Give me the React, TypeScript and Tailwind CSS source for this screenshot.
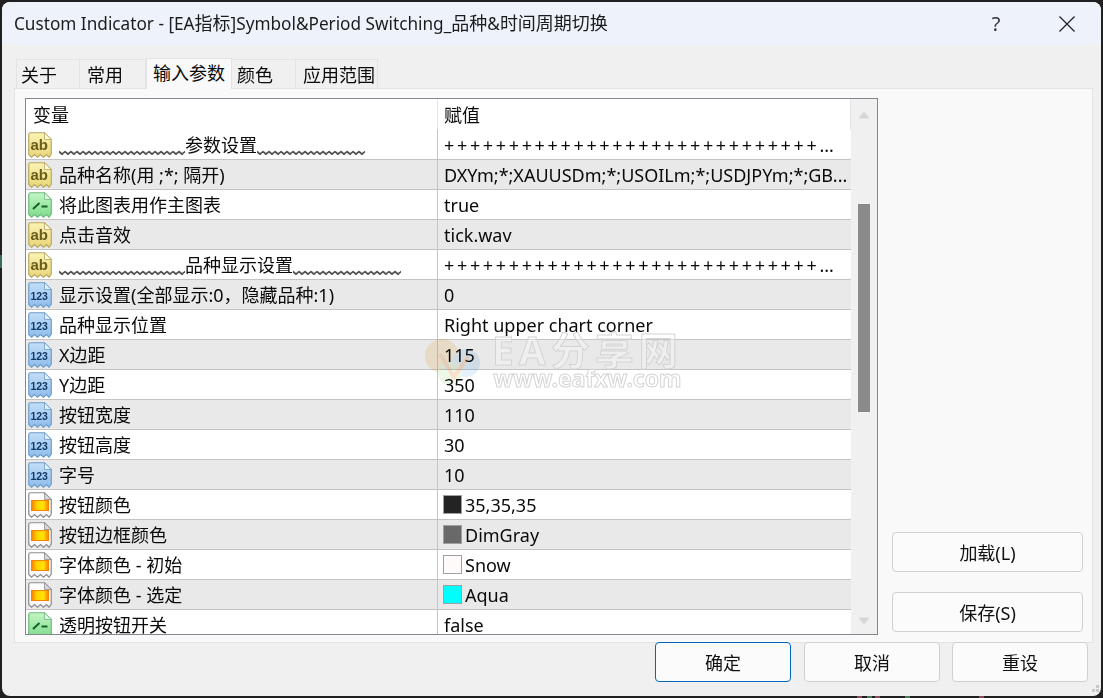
import React from "react";

type Kind = "ab" | "bool" | "num" | "color";

const TORN = "M2.5 0.75H16.5L23.25 7.5V22L21 25.25L18.5 22.5L15.5 25.25L12.5 22.5L9.5 25.25L6.5 22.5L3.5 25.25L0.75 22.5V2.5Q0.75 0.75 2.5 0.75Z";

function RowIcon({ kind }: { kind: Kind }) {
  const palette = {
    ab: { top: "#fbf3b4", bottom: "#e8d678", stroke: "#b9a860", fold: "#fffbe0" },
    bool: { top: "#c4f5c4", bottom: "#7fdc8b", stroke: "#6fbb7e", fold: "#e4fbe6" },
    num: { top: "#c4def6", bottom: "#8dbdec", stroke: "#6f9dca", fold: "#e6f2fd" },
    color: { top: "#ffffff", bottom: "#f6f6f6", stroke: "#8c8c8c", fold: "#d8d8d8" },
  }[kind];
  const id = "g-" + kind;
  return (
    <svg width="24" height="26" viewBox="0 0 24 26" className="shrink-0">
      <defs>
        <linearGradient id={id} x1="0" y1="0" x2="0" y2="1">
          <stop offset="0" stopColor={palette.top} />
          <stop offset="1" stopColor={palette.bottom} />
        </linearGradient>
        <linearGradient id="g-fire" x1="0" y1="0" x2="1" y2="0">
          <stop offset="0" stopColor="#ff7a00" />
          <stop offset="0.3" stopColor="#ffd000" />
          <stop offset="0.7" stopColor="#ffe600" />
          <stop offset="1" stopColor="#ff7a00" />
        </linearGradient>
      </defs>
      <path d={TORN} fill={`url(#${id})`} stroke={palette.stroke} strokeWidth="1.2" />
      <path d="M16.5 0.75V7.5H23.25Z" fill={palette.fold} stroke={palette.stroke} strokeWidth="0.8" />
      {kind === "ab" && (
        <text x="2.5" y="18" fontSize="15" fontWeight="700" fill="#6a5c1c" fontFamily="'Liberation Sans',sans-serif">
          ab
        </text>
      )}
      {kind === "num" && (
        <text x="2.4" y="17.5" fontSize="10.5" fontWeight="700" fill="#123a66" fontFamily="'Liberation Sans',sans-serif">
          123
        </text>
      )}
      {kind === "bool" && (
        <path d="M5 17L11.5 11M13.5 14.5H19.5" stroke="#14602a" strokeWidth="2" fill="none" />
      )}
      {kind === "color" && (
        <>
          <rect x="3.5" y="8.5" width="17" height="10" fill="url(#g-fire)" />
          <rect x="3.5" y="8.5" width="17" height="10" fill="none" stroke="#f98300" strokeWidth="1" />
        </>
      )}
    </svg>
  );
}

function Wave({ n }: { n: number }) {
  return (
    <span className="inline-block origin-[50%_94%] scale-y-[2.2] leading-none opacity-70">{"﹏".repeat(n)}</span>
  );
}

const PLUS = "+".repeat(29);

type Row = {
  kind: Kind;
  name: string;
  value: string;
  swatch?: string;
  plus?: boolean;
  wave?: boolean;
};

const rows: Row[] = [
  { kind: "ab", name: "参数设置", value: PLUS, plus: true, wave: true },
  { kind: "ab", name: "品种名称(用 ;*; 隔开)", value: "DXYm;*;XAUUSDm;*;USOILm;*;USDJPYm;*;GB..." },
  { kind: "bool", name: "将此图表用作主图表", value: "true" },
  { kind: "ab", name: "点击音效", value: "tick.wav" },
  { kind: "ab", name: "品种显示设置", value: PLUS, plus: true, wave: true },
  { kind: "num", name: "显示设置(全部显示:0，隐藏品种:1)", value: "0" },
  { kind: "num", name: "品种显示位置", value: "Right upper chart corner" },
  { kind: "num", name: "X边距", value: "115" },
  { kind: "num", name: "Y边距", value: "350" },
  { kind: "num", name: "按钮宽度", value: "110" },
  { kind: "num", name: "按钮高度", value: "30" },
  { kind: "num", name: "字号", value: "10" },
  { kind: "color", name: "按钮颜色", value: "35,35,35", swatch: "#232323" },
  { kind: "color", name: "按钮边框颜色", value: "DimGray", swatch: "#696969" },
  { kind: "color", name: "字体颜色 - 初始", value: "Snow", swatch: "#fffafa" },
  { kind: "color", name: "字体颜色 - 选定", value: "Aqua", swatch: "#00ffff" },
  { kind: "bool", name: "透明按钮开关", value: "false" },
];

const tabs = [
  { label: "关于", w: "w-[64px]", pl: "pl-[4px]" },
  { label: "常用", w: "w-[66px]", pl: "pl-[7px]" },
  { label: "输入参数", w: "w-[86px]", pl: "pl-[6px]", active: true },
  { label: "颜色", w: "w-[64px]", pl: "pl-[5px]" },
  { label: "应用范围", w: "w-[82px]", pl: "pl-[7px]" },
];

function Btn({ children, w, primary }: { children: React.ReactNode; w: string; primary?: boolean }) {
  return (
    <button
      className={`${w} h-[40px] rounded-[4px] border bg-[#fbfbfb] pt-[2px] text-[18px] leading-none text-[#111] ${
        primary ? "border-[#0067c0]" : "border-[#d0d0d0]"
      }`}
    >
      {children}
    </button>
  );
}

const marks = [
  { l: "left-[857px]", c: "bg-[#8a4a5a]" },
  { l: "left-[867px]", c: "bg-[#4a7a5a]" },
  { l: "left-[875px]", c: "bg-[#8a4a5a]" },
  { l: "left-[905px]", c: "bg-[#4a7a5a]" },
  { l: "left-[979px]", c: "bg-[#8a4a5a]" },
];

export default function App() {
  return (
    <div className="relative h-[698px] w-[1103px] overflow-hidden bg-[#202020] pl-[2px] pt-[2px] font-['Noto_Sans','Noto_Sans_CJK_SC',sans-serif] text-[18px] text-[#0a0a0a]">
      {marks.map((m) => (
        <div key={m.l} className={`absolute bottom-0 h-[2px] w-[5px] ${m.l} ${m.c}`} />
      ))}
      <div className="absolute left-0 top-[255px] h-[13px] w-[2px] bg-[#3a6a5a]" />
      <div className="flex h-[694px] w-[1099px] flex-col overflow-hidden rounded-[8px] bg-[#f0f0f0]">
        {/* title bar */}
        <div className="flex h-[43px] shrink-0 items-center bg-[#eef2fb] pl-[12px]">
          <span className="flex-1 whitespace-nowrap text-[18px] text-[#1c1c1c]">
            <span className="text-[17.2px]">Custom Indicator - [EA</span>指标
            <span className="text-[17.2px]">]Symbol&amp;Period Switching_</span>品种
            <span className="text-[17.2px]">&amp;</span>时间周期切换
          </span>
          <span className="w-[16px] text-center text-[20px] text-[#333]">?</span>
          <svg width="18" height="18" viewBox="0 0 18 18" className="ml-[54px] mr-[25px]">
            <path d="M1.5 1.5L16.5 16.5M16.5 1.5L1.5 16.5" stroke="#222" strokeWidth="1.3" fill="none" />
          </svg>
        </div>

        {/* tabs */}
        <div className="flex h-[43px] shrink-0 items-end pl-[14px]">
          {tabs.map((t) =>
            t.active ? (
              <div
                key={t.label}
                className={`relative z-10 -mb-px flex h-[31px] items-start border-x border-t border-[#e3e3e3] bg-[#f9f9f9] ${t.w} ${t.pl} leading-[28px]`}
              >
                {t.label}
              </div>
            ) : (
              <div
                key={t.label}
                className={`flex h-[29px] items-center border-t border-r border-[#e3e3e3] bg-[#f0f0f0] pt-[2px] first:border-l ${t.w} ${t.pl}`}
              >
                {t.label}
              </div>
            )
          )}
        </div>

        {/* panel */}
        <div className="ml-[12px] flex h-[555px] w-[1079px] shrink-0 border border-[#e3e3e3] bg-[#f9f9f9] pl-[10px] pt-[9px]">
          <div className="relative flex h-[537px] w-[853px] shrink-0 overflow-hidden border border-[#828790] bg-white">
            <div className="flex w-[825px] flex-col">
              <div className="flex h-[31px] shrink-0 items-center">
                <div className="h-full w-[412px] border-r border-[#e5e5e5] pl-[7px] leading-[33px]">变量</div>
                <div className="h-full flex-1 border-r border-[#e5e5e5] pl-[6px] leading-[33px]">赋值</div>
              </div>
              {rows.map((r, i) => (
                <div
                  key={i}
                  className={`flex h-[30px] shrink-0 items-stretch border-b border-[#c4c4c4] ${
                    i % 2 === 1 ? "bg-[#e9e9e9]" : "bg-white"
                  }`}
                >
                  <div className="flex w-[412px] items-center gap-[7px] border-r border-[#c4c4c4] pl-[2px] whitespace-nowrap">
                    <RowIcon kind={r.kind} />
                    <span className="block pt-[2px]">
                      {r.wave && <Wave n={7} />}
                      {r.name}
                      {r.wave && <Wave n={6} />}
                    </span>
                  </div>
                  <div className="flex flex-1 items-center pl-[5px] whitespace-nowrap">
                    {r.swatch && (
                      <span
                        className="mr-[3px] inline-block h-[19px] w-[19px] border border-[#a0a0a0]"
                        style={{ backgroundColor: r.swatch }}
                      />
                    )}
                    {r.plus ? (
                      <span className="block pl-px pt-[2px]">
                        <span className="tracking-[2.65px]">{r.value}</span>...
                      </span>
                    ) : (
                      <span className={`block pt-[2px] ${r.swatch ? "" : "pl-px"}`}>{r.value}</span>
                    )}
                  </div>
                </div>
              ))}
            </div>

            {/* scrollbar */}
            <div className="flex w-[26px] shrink-0 flex-col items-center bg-[#f0f0f0] pt-[12px]">
              <svg width="12" height="8" viewBox="0 0 12 8">
                <path d="M6 0.5L11.5 7.5H0.5Z" fill="#d6d6d6" />
              </svg>
              <div className="mt-[85px] h-[208px] w-[12px] shrink-0 bg-[#8a8a8a]" />
              <svg width="12" height="8" viewBox="0 0 12 8" className="mt-[205px]">
                <path d="M0.5 0.5H11.5L6 7.5Z" fill="#d6d6d6" />
              </svg>
            </div>

            {/* watermark */}
            <div className="pointer-events-none absolute left-[396px] top-[234px] flex items-center gap-[6px]">
              <svg width="64" height="52" viewBox="0 0 64 52" className="opacity-40 mix-blend-multiply">
                <circle cx="20" cy="21" r="17" fill="#fbd9a0" />
                <circle cx="44" cy="28" r="14" fill="#bcdcf4" />
                <circle cx="28" cy="38" r="12" fill="#cfeac0" />
                <path d="M18 19L32 42L46 22" fill="none" stroke="#f2b07a" strokeWidth="4" />
              </svg>
              <div className="flex flex-col items-center">
                <span className="text-[39px] leading-[34px] font-bold tracking-[5px] text-white/30 [-webkit-text-stroke:1px_#d4d4d4]">
                  EA分享网
                </span>
                <span className="text-[23px] leading-[22px] font-bold text-white/30 [-webkit-text-stroke:1px_#d4d4d4]">
                  www.eafxw.com
                </span>
              </div>
            </div>
          </div>

          {/* side buttons */}
          <div className="ml-[14px] flex h-[534px] flex-col justify-end gap-[20px]">
            <Btn w="w-[191px]">加载(L)</Btn>
            <Btn w="w-[191px]">保存(S)</Btn>
          </div>
        </div>

        {/* footer */}
        <div className="relative flex justify-end pr-[13px]">
          <div className="-mt-px flex">
            <Btn w="w-[136px]" primary>
              确定
            </Btn>
            <div className="ml-[13px]">
              <Btn w="w-[136px]">取消</Btn>
            </div>
            <div className="ml-[12px]">
              <Btn w="w-[136px]">重设</Btn>
            </div>
          </div>
          <svg width="9" height="9" viewBox="0 0 9 9" className="absolute bottom-[-12px] right-[1px]">
            <path d="M5 0h3v3h-3zM1 4h3v3h-3zM5 4h3v3h-3z" fill="#c8c8c8" />
          </svg>
        </div>
      </div>
    </div>
  );
}
